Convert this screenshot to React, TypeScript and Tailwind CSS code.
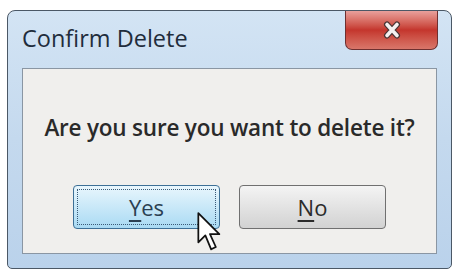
function CloseGlyph() {
  return (
    <svg width="20" height="18" viewBox="0 0 20 18">
      <path d="M5 3.5 L15 14.5 M15 3.5 L5 14.5" stroke="#4a3434" strokeWidth="6" strokeLinecap="round" />
      <path d="M5 3.5 L15 14.5 M15 3.5 L5 14.5" stroke="#f4f0f0" strokeWidth="3.6" strokeLinecap="round" />
    </svg>
  );
}

function Cursor() {
  return (
    <svg width="26" height="42" viewBox="0 0 22 36">
      <path
        d="M1 1 L1 26 L7 20 L12 32 L16 30 L11 19 L19 19 Z"
        fill="#ffffff"
        stroke="#111111"
        strokeWidth="1.5"
        strokeLinejoin="round"
      />
    </svg>
  );
}

export default function App() {
  return (
    <div className="w-[454px] h-[270px] bg-white pt-[10px] pl-[7px] font-['Open_Sans',sans-serif] overflow-hidden">
      <div className="w-[445px] h-[259px] rounded-t-[8px] rounded-b-[5px] border border-[#4b5866] bg-gradient-to-b from-[#d3e4f4] via-[#c4d9ee] to-[#bad2eb] flex flex-col">
        {/* Title bar */}
        <div className="h-[57px] flex items-start justify-between pl-[14px] pr-[13px]">
          <span className="mt-[13px] text-[23.5px] leading-[28px] text-[#1f2d3c]">Confirm Delete</span>
          <div className="w-[93px] h-[39px] rounded-b-[7px] border border-t-0 border-[#6e3030] bg-gradient-to-b from-[#e8a09c] via-[#c4352d] to-[#d9766a] flex items-center justify-center">
            <CloseGlyph />
          </div>
        </div>

        {/* Content panel */}
        <div className="mx-[14px] h-[186px] border border-[#8a96a3] bg-[#f0efed] flex flex-col items-center">
          <p className="mt-[44px] text-[22.5px] leading-[30px] font-semibold text-[#2a2a2a] tracking-[-0.2px]">
            Are you sure you want to delete it?
          </p>
          <div className="mt-[42px] flex gap-[19px] relative">
            <button className="w-[147px] h-[44px] rounded-[4px] border border-[#3c6f96] bg-gradient-to-b from-[#e8f6fd] to-[#a9daf3] p-[3px]">
              <div className="w-full h-full border border-dotted border-[#3a5a78] flex items-center justify-center text-[22px] text-[#2b3f52]">
                <span>
                  <span className="underline underline-offset-[4px]">Y</span>es
                </span>
              </div>
            </button>
            <button className="w-[147px] h-[44px] rounded-[4px] border border-[#707070] bg-gradient-to-b from-[#f4f4f4] to-[#d2d2d2] flex items-center justify-center text-[22px] text-[#2b2b2b]">
              <span>
                <span className="underline underline-offset-[4px]">N</span>o
              </span>
            </button>
            <div className="absolute left-[124px] top-[27px]">
              <Cursor />
            </div>
          </div>
        </div>
      </div>
    </div>
  );
}
